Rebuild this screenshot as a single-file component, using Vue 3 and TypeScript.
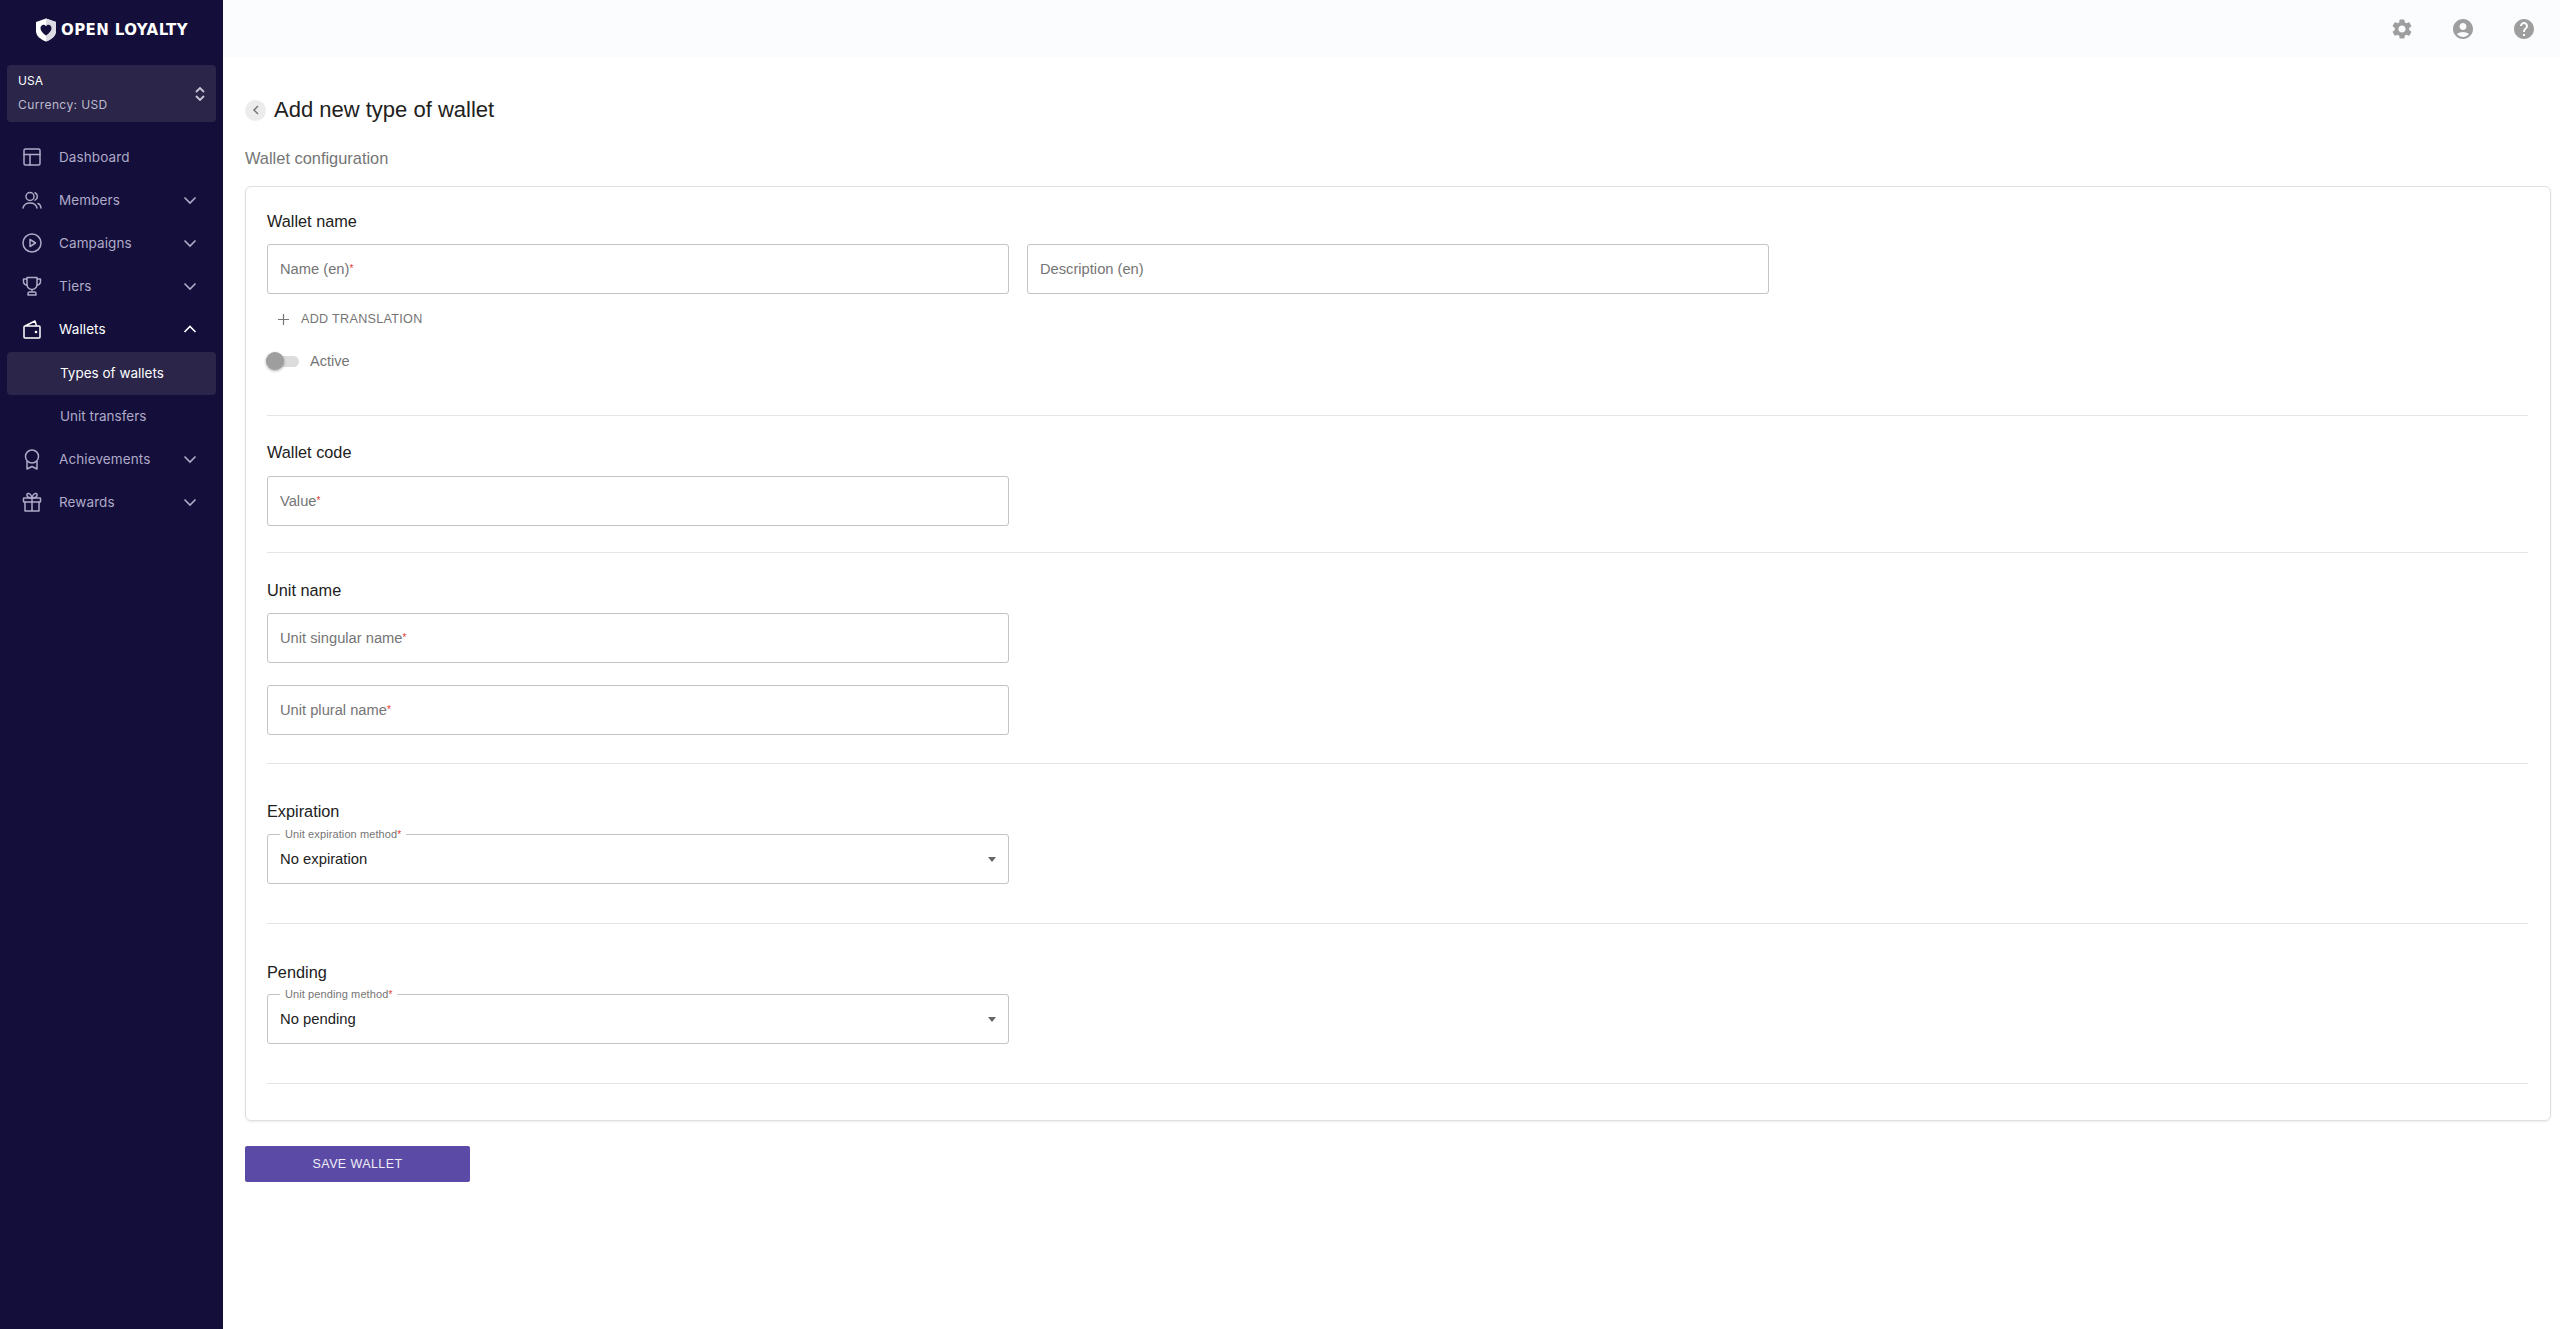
<script setup lang="ts">
interface NavItem { label: string; icon: string; chevron?: 'down' | 'up'; active?: boolean }
const before: NavItem[] = [
  { label: 'Dashboard', icon: 'dashboard' },
  { label: 'Members', icon: 'members', chevron: 'down' },
  { label: 'Campaigns', icon: 'campaigns', chevron: 'down' },
  { label: 'Tiers', icon: 'tiers', chevron: 'down' },
  { label: 'Wallets', icon: 'wallets', chevron: 'up', active: true },
]
const after: NavItem[] = [
  { label: 'Achievements', icon: 'achievements', chevron: 'down' },
  { label: 'Rewards', icon: 'rewards', chevron: 'down' },
]
</script>

<template>
  <div class="app">
    <aside class="side">
      <div class="logo">
        <svg width="22" height="24" viewBox="0 0 22 24"><path d="M11 .5 21 4V13c0 5-4.500 8.500-10 10.500C5.500 21.500 1 18 1 13V4z" fill="#fff"/><path d="M11 .5 21 4V13c0 5-4.500 8.500-10 10.500z" fill="#dcdbe4"/><path d="M11 17.500C7.500 15 5.500 12.500 5.500 10c0-2 1.500-3.300 3-3.300 1.100 0 2 .6 2.500 1.500.5-.9 1.400-1.500 2.500-1.500 1.500 0 3 1.300 3 3.300 0 2.500-2 5-5.500 7.500z" fill="#140e3a"/></svg>
        <span>OPEN LOYALTY</span>
      </div>
      <div class="store">
        <div class="store-text">
          <div class="store-name">USA</div>
          <div class="store-cur">Currency: USD</div>
        </div>
        <svg width="12" height="18" viewBox="0 0 12 18" fill="none" stroke="#c9c7d6" stroke-width="1.800"><path d="M2 7l4-4 4 4M2 11l4 4 4-4"/></svg>
      </div>
      <nav class="nav">
        <template v-for="n in before" :key="n.label">
          <div class="item" :class="{ on: n.active }">
            <svg class="ico" width="24" height="24" viewBox="0 0 24 24" fill="none" stroke="currentColor" stroke-width="1.500" stroke-linejoin="round" stroke-linecap="round">
              <template v-if="n.icon === 'dashboard'"><rect x="4" y="4" width="16" height="16" rx="1.500"/><path d="M4 9.500h16M10 9.500V20"/></template>
              <template v-else-if="n.icon === 'members'"><circle cx="10" cy="8.500" r="4"/><path d="M15 4.800a4 4 0 0 1 0 7.300M3 20c.8-3.500 3.500-5 7-5s6.200 1.500 7 5M18 15.500c1.600.6 2.700 2.200 3 4.500"/></template>
              <template v-else-if="n.icon === 'campaigns'"><circle cx="12" cy="12" r="9"/><path d="M10 8.500v7l5.500-3.500z"/></template>
              <template v-else-if="n.icon === 'tiers'"><path d="M7 3.500h10v7a5 5 0 0 1-10 0zM7 5H3.500v2.500c0 2 1.500 3.500 3.800 3.800M17 5h3.500v2.500c0 2-1.500 3.500-3.800 3.800M12 15.500V18M8 21v-1.500c0-.8.700-1.500 1.500-1.500h5c.8 0 1.500.7 1.500 1.500V21z"/></template>
              <template v-else-if="n.icon === 'wallets'"><path d="M5 9 15 4l1.500 5M5 9h14a1 1 0 0 1 1 1v10a1 1 0 0 1-1 1H5a1 1 0 0 1-1-1V10a1 1 0 0 1 1-1z"/><circle cx="16" cy="15" r=".6" fill="currentColor"/></template>
            </svg>
            <span class="lbl">{{ n.label }}</span>
            <svg v-if="n.chevron" class="chev" width="14" height="10" viewBox="0 0 14 10" fill="none" stroke="currentColor" stroke-width="1.600"><path :d="n.chevron === 'down' ? 'M1.500 2.500 7 8l5.500-5.500' : 'M1.500 8 7 2.500 12.500 8'"/></svg>
          </div>
        </template>
        <div class="sub on">Types of wallets</div>
        <div class="sub">Unit transfers</div>
        <div v-for="n in after" :key="n.label" class="item">
          <svg class="ico" width="24" height="24" viewBox="0 0 24 24" fill="none" stroke="currentColor" stroke-width="1.500" stroke-linejoin="round" stroke-linecap="round">
            <template v-if="n.icon === 'achievements'"><circle cx="12" cy="9.500" r="6.500"/><path d="M7 14.500V22l5-2.500 5 2.500v-7.500"/></template>
            <template v-else><rect x="3.500" y="8" width="17" height="4" rx=".5"/><path d="M5 12v9h14v-9M12 8v13M12 8C9 8 6.500 7 7 4.500 7.500 2.500 11 3 12 8zM12 8c3 0 5.500-1 5-3.500C16.500 2.500 13 3 12 8z"/></template>
          </svg>
          <span class="lbl">{{ n.label }}</span>
          <svg class="chev" width="14" height="10" viewBox="0 0 14 10" fill="none" stroke="currentColor" stroke-width="1.600"><path d="M1.500 2.500 7 8l5.500-5.500"/></svg>
        </div>
      </nav>
    </aside>

    <div class="main">
      <header class="top">
        <svg width="24" height="24" viewBox="0 0 24 24" fill="#9e9e9e"><path d="M19.140 12.940c.04-.3.060-.61.060-.94 0-.32-.02-.64-.07-.94l2.030-1.580c.18-.14.230-.41.120-.61l-1.920-3.320c-.12-.22-.37-.29-.59-.22l-2.390.96c-.5-.38-1.030-.7-1.620-.94l-.36-2.540c-.04-.24-.24-.41-.48-.41h-3.840c-.24 0-.43.170-.47.410l-.36 2.540c-.59.240-1.130.57-1.620.94l-2.390-.96c-.22-.08-.47 0-.59.220L2.740 8.870c-.12.210-.08.470.12.610l2.030 1.580c-.05.3-.09.630-.09.940s.02.640.07.940l-2.030 1.580c-.18.140-.23.410-.12.610l1.920 3.320c.12.220.37.290.59.220l2.390-.96c.5.380 1.030.7 1.620.94l.36 2.540c.05.240.24.410.48.410h3.840c.24 0 .44-.17.470-.41l.36-2.540c.59-.24 1.130-.56 1.620-.94l2.390.96c.22.080.47 0 .59-.22l1.920-3.320c.12-.22.070-.47-.12-.61l-2.010-1.580zM12 15.600c-1.980 0-3.600-1.620-3.600-3.600s1.620-3.600 3.600-3.600 3.600 1.620 3.600 3.600-1.620 3.600-3.600 3.600z"/></svg>
        <svg width="24" height="24" viewBox="0 0 24 24" fill="#9e9e9e"><path d="M12 2C6.480 2 2 6.480 2 12s4.480 10 10 10 10-4.480 10-10S17.520 2 12 2zm0 4c1.930 0 3.500 1.570 3.500 3.500S13.930 13 12 13s-3.500-1.570-3.500-3.500S10.070 6 12 6zm0 14c-2.030 0-4.430-.82-6.140-2.880C7.550 15.800 9.680 15 12 15s4.450.8 6.140 2.120C16.430 19.180 14.030 20 12 20z"/></svg>
        <svg width="24" height="24" viewBox="0 0 24 24" fill="#9e9e9e"><path d="M12 2C6.480 2 2 6.480 2 12s4.480 10 10 10 10-4.480 10-10S17.520 2 12 2zm1 17h-2v-2h2v2zm2.070-7.750-.9.920C13.450 12.900 13 13.500 13 15h-2v-.5c0-1.100.45-2.100 1.170-2.830l1.240-1.260c.37-.36.590-.86.590-1.410 0-1.100-.9-2-2-2s-2 .9-2 2H8c0-2.210 1.790-4 4-4s4 1.790 4 4c0 .88-.36 1.680-.93 2.250z"/></svg>
      </header>

      <main class="content">
        <div class="head">
          <span class="back"><svg width="10" height="12" viewBox="0 0 10 12" fill="none" stroke="#757575" stroke-width="1.500"><path d="M7 2 3 6l4 4"/></svg></span>
          <h1>Add new type of wallet</h1>
        </div>
        <div class="subtitle">Wallet configuration</div>

        <section class="card">
          <div class="sec s1">
            <h2>Wallet name</h2>
            <div class="pair">
              <div class="field"><span>Name (en)<i>*</i></span></div>
              <div class="field"><span>Description (en)</span></div>
            </div>
            <div class="add">
              <svg width="11" height="11" viewBox="0 0 11 11" stroke="#757575" stroke-width="1.200"><path d="M5.500 0v11M0 5.500h11"/></svg>
              <span>ADD TRANSLATION</span>
            </div>
            <div class="switch">
              <span class="track"><span class="thumb"></span></span>
              <span>Active</span>
            </div>
          </div>
          <div class="sec s2">
            <h2>Wallet code</h2>
            <div class="field"><span>Value<i>*</i></span></div>
          </div>
          <div class="sec s3">
            <h2>Unit name</h2>
            <div class="field"><span>Unit singular name<i>*</i></span></div>
            <div class="field second"><span>Unit plural name<i>*</i></span></div>
          </div>
          <div class="sec s4">
            <h2>Expiration</h2>
            <div class="field select">
              <label>Unit expiration method<i>*</i></label>
              <b>No expiration</b>
              <em></em>
            </div>
          </div>
          <div class="sec s5">
            <h2>Pending</h2>
            <div class="field select">
              <label>Unit pending method<i>*</i></label>
              <b>No pending</b>
              <em></em>
            </div>
          </div>
        </section>

        <button class="save" type="button">SAVE WALLET</button>
      </main>
    </div>
  </div>
</template>

<style>
html, body { margin: 0; background: #fff; }
</style>

<style scoped>
.app { display: flex; min-height: 1329px; font-family: "Liberation Sans", Arial, sans-serif; color: #212121; }
.side { width: 223px; flex: none; background: #140e3a; box-sizing: border-box; padding: 18px 7px 0; font-family: Inter, sans-serif; }
.logo { display: flex; align-items: center; justify-content: center; gap: 4px; height: 24px; margin-bottom: 23px; color: #fff; font-family: "DejaVu Sans", sans-serif; font-weight: 700; font-size: 15px; letter-spacing: .4px; white-space: nowrap; }
.store { height: 57px; background: #2a2549; border-radius: 4px; display: flex; align-items: center; justify-content: space-between; padding: 0 10px 0 11px; box-sizing: border-box; }
.store-text { padding-bottom: 2px; }
.store-name { font-size: 12px; color: #fff; line-height: 16px; }
.store-cur { font-size: 12px; color: #bdbbcc; line-height: 16px; margin-top: 8px; letter-spacing: .4px; }
.nav { margin-top: 14px; }
.item { height: 43px; box-sizing: border-box; display: flex; align-items: center; padding: 0 19px 2px 13px; color: #aeaac8; font-size: 13.500px; }
.item.on { color: #fff; }
.ico { flex: none; margin-right: 15px; }
.lbl { flex: 1; letter-spacing: .1px; }
.chev { flex: none; }
.sub { height: 43px; line-height: 43px; padding-left: 53px; font-size: 13.500px; color: #aeaac8; border-radius: 4px; }
.sub.on { color: #fff; background: #2a2549; margin-top: 1px; }
.main { flex: 1; min-width: 0; display: flex; flex-direction: column; }
.top { height: 57px; background: #fbfcfe; display: flex; align-items: center; justify-content: flex-end; gap: 37px; padding-right: 24px; }
.content { padding: 0 9px 0 22px; }
.head { display: flex; align-items: center; gap: 8px; margin-top: 39px; height: 28px; }
.back { width: 21px; height: 21px; border-radius: 50%; background: #ececec; display: flex; align-items: center; justify-content: center; }
h1 { margin: 0; font-size: 22px; font-weight: 400; line-height: 28px; }
.subtitle { margin-top: 24px; font-size: 16.400px; line-height: 20px; color: #757575; }
.card { margin-top: 18px; border: 1px solid #e0e0e0; border-radius: 6px; box-sizing: border-box; height: 935px; padding: 0 22px 0 21px; box-shadow: 0 1px 2px rgba(0,0,0,.08); }
.sec { border-bottom: 1px solid #e5e5e5; box-sizing: border-box; }
h2 { margin: 0; font-size: 16.300px; font-weight: 400; line-height: 20px; color: #212121; }
.s1 { height: 229px; padding-top: 24px; }
.s2 { height: 137px; padding-top: 26px; }
.s3 { height: 211px; padding-top: 27px; }
.s4 { height: 160px; padding-top: 37px; }
.s5 { height: 160px; padding-top: 38px; }
.sec h2 + * { margin-top: 14px; }
.s1 h2 + *, .s3 h2 + *, .s4 h2 + * { margin-top: 13px; }
.s5 h2 + * { margin-top: 12px; }
.pair { display: flex; gap: 18px; }
.field { width: 742px; height: 50px; border: 1px solid #c4c4c4; border-radius: 3px; box-sizing: border-box; display: flex; align-items: center; padding: 0 12px; font-size: 14.700px; color: #757575; position: relative; }
.field.second { margin-top: 22px; }
i { font-style: normal; color: #e53935; font-size: 10px; vertical-align: 2px; }
.add { display: flex; align-items: center; gap: 12px; height: 20px; margin-top: 15px; padding-left: 11px; font-size: 12.600px; color: #757575; letter-spacing: .3px; }
.switch { display: flex; align-items: center; height: 20px; margin-top: 22px; font-size: 14.500px; color: #757575; gap: 11px; }
.track { width: 32px; height: 11px; border-radius: 6px; background: #dcdcdc; position: relative; display: block; }
.thumb { position: absolute; left: -1px; top: -3.500px; width: 18px; height: 18px; border-radius: 50%; background: #9e9e9e; box-shadow: 0 1px 3px rgba(0,0,0,.35); }
.select label { position: absolute; left: 12px; top: -8px; background: #fff; padding: 0 5px; font-size: 11px; line-height: 14px; color: #757575; letter-spacing: .1px; }
.select label i { vertical-align: 0; }
.select b { font-weight: 400; color: #212121; font-size: 14.800px; }
.select em { position: absolute; right: 12px; top: 22px; width: 0; height: 0; border-left: 4.500px solid transparent; border-right: 4.500px solid transparent; border-top: 5px solid #666; }
.save { display: block; margin-top: 25px; width: 225px; height: 36px; background: #5c4ba6; border: 0; border-radius: 2px; color: #f0eef8; font-family: "Liberation Sans", Arial, sans-serif; font-size: 12.500px; letter-spacing: .4px; }
</style>
